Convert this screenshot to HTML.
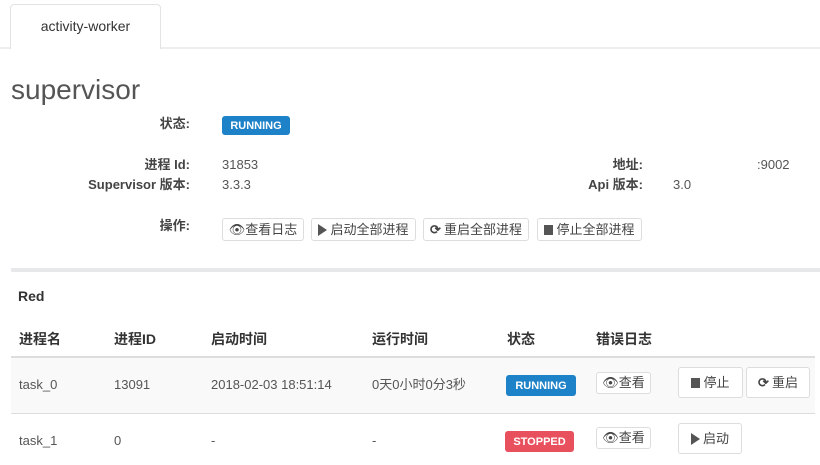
<!DOCTYPE html>
<html><head><meta charset="utf-8"><style>
*{margin:0;padding:0;box-sizing:border-box}
body{width:820px;height:465px;overflow:hidden;background:#fff;font-family:"Liberation Sans","Noto Sans CJK SC",sans-serif;font-size:13px;line-height:16px;color:#555;position:relative}
.a{position:absolute;white-space:nowrap}
.lbl{position:absolute;text-align:right;width:190px;left:0;color:#444;font-weight:bold;line-height:16px;white-space:nowrap}
.btn{position:absolute;border:1px solid #ddd;border-radius:3px;background:#fff;color:#444;font-size:13px;display:flex;align-items:center;justify-content:center;gap:3px}
.badge{position:absolute;color:#fff;font-weight:bold;font-size:11px;border-radius:3px;display:flex;align-items:center;justify-content:center}
.sq{display:inline-block;width:9px;height:10px;background:#555}
.tri{display:inline-block;width:0;height:0;border-left:9px solid #555;border-top:6px solid transparent;border-bottom:6px solid transparent}
</style></head><body>
<div class="a" style="left:0;top:47px;width:820px;height:2px;background:#eee"></div>
<div class="a" style="left:10px;top:4px;width:151px;height:45px;border:1px solid #e3e3e3;border-bottom:none;border-radius:4px 4px 0 0;background:#fff;text-align:center;line-height:42px;color:#333;font-size:14px">activity-worker</div>
<div class="a" style="left:11px;top:74px;font-size:28px;line-height:32px;color:#555">supervisor</div>
<div class="lbl" style="top:116px">状态:</div>
<div class="badge" style="left:222px;top:116px;width:68px;height:19px;background:#1e82c8">RUNNING</div>
<div class="lbl" style="top:157px">进程 Id:</div>
<div class="a" style="left:222px;top:157px">31853</div>
<div class="lbl" style="top:177px">Supervisor 版本:</div>
<div class="a" style="left:222px;top:177px">3.3.3</div>
<div class="lbl" style="top:157px;left:453px">地址:</div>
<div class="a" style="left:757px;top:157px">:9002</div>
<div class="lbl" style="top:177px;left:453px">Api 版本:</div>
<div class="a" style="left:673px;top:177px">3.0</div>
<div class="lbl" style="top:218px">操作:</div>
<div class="btn" style="left:222px;top:218px;width:82px;height:23px">👁&#xFE0E;查看日志</div>
<div class="btn" style="left:311px;top:218px;width:105px;height:23px"><span class="tri"></span>启动全部进程</div>
<div class="btn" style="left:423px;top:218px;width:106px;height:23px"><b>⟳</b>重启全部进程</div>
<div class="btn" style="left:537px;top:218px;width:105px;height:23px"><span class="sq"></span>停止全部进程</div>
<div class="a" style="left:11px;top:268px;width:809px;height:4px;background:#e6e8ea"></div>
<div class="a" style="left:18px;top:288px;font-size:14px;color:#333;font-weight:bold">Red</div>
<div class="a" style="left:19px;top:331px;font-size:14px;color:#333;font-weight:bold">进程名</div>
<div class="a" style="left:114px;top:331px;font-size:14px;color:#333;font-weight:bold">进程ID</div>
<div class="a" style="left:211px;top:331px;font-size:14px;color:#333;font-weight:bold">启动时间</div>
<div class="a" style="left:372px;top:331px;font-size:14px;color:#333;font-weight:bold">运行时间</div>
<div class="a" style="left:507px;top:331px;font-size:14px;color:#333;font-weight:bold">状态</div>
<div class="a" style="left:596px;top:331px;font-size:14px;color:#333;font-weight:bold">错误日志</div>
<div class="a" style="left:11px;top:356px;width:804px;height:2px;background:#ddd"></div>
<div class="a" style="left:11px;top:358px;width:804px;height:55px;background:#f9f9f9"></div>
<div class="a" style="left:11px;top:413px;width:804px;height:1px;background:#ddd"></div>
<div class="a" style="left:19px;top:377px">task_0</div>
<div class="a" style="left:114px;top:377px">13091</div>
<div class="a" style="left:211px;top:377px">2018-02-03 18:51:14</div>
<div class="a" style="left:372px;top:377px">0天0小时0分3秒</div>
<div class="badge" style="left:506px;top:375px;width:70px;height:21px;background:#1e82c8">RUNNING</div>
<div class="btn" style="left:596px;top:372px;width:55px;height:22px">👁&#xFE0E;查看</div>
<div class="btn" style="left:678px;top:367px;width:65px;height:31px"><span class="sq"></span>停止</div>
<div class="btn" style="left:746px;top:367px;width:64px;height:31px"><b>⟳</b>重启</div>
<div class="a" style="left:19px;top:433px">task_1</div>
<div class="a" style="left:114px;top:433px">0</div>
<div class="a" style="left:211px;top:433px">-</div>
<div class="a" style="left:372px;top:433px">-</div>
<div class="badge" style="left:505px;top:431px;width:69px;height:21px;background:#e9505e">STOPPED</div>
<div class="btn" style="left:596px;top:427px;width:55px;height:22px">👁&#xFE0E;查看</div>
<div class="btn" style="left:678px;top:423px;width:64px;height:31px"><span class="tri"></span>启动</div>
</body></html>
